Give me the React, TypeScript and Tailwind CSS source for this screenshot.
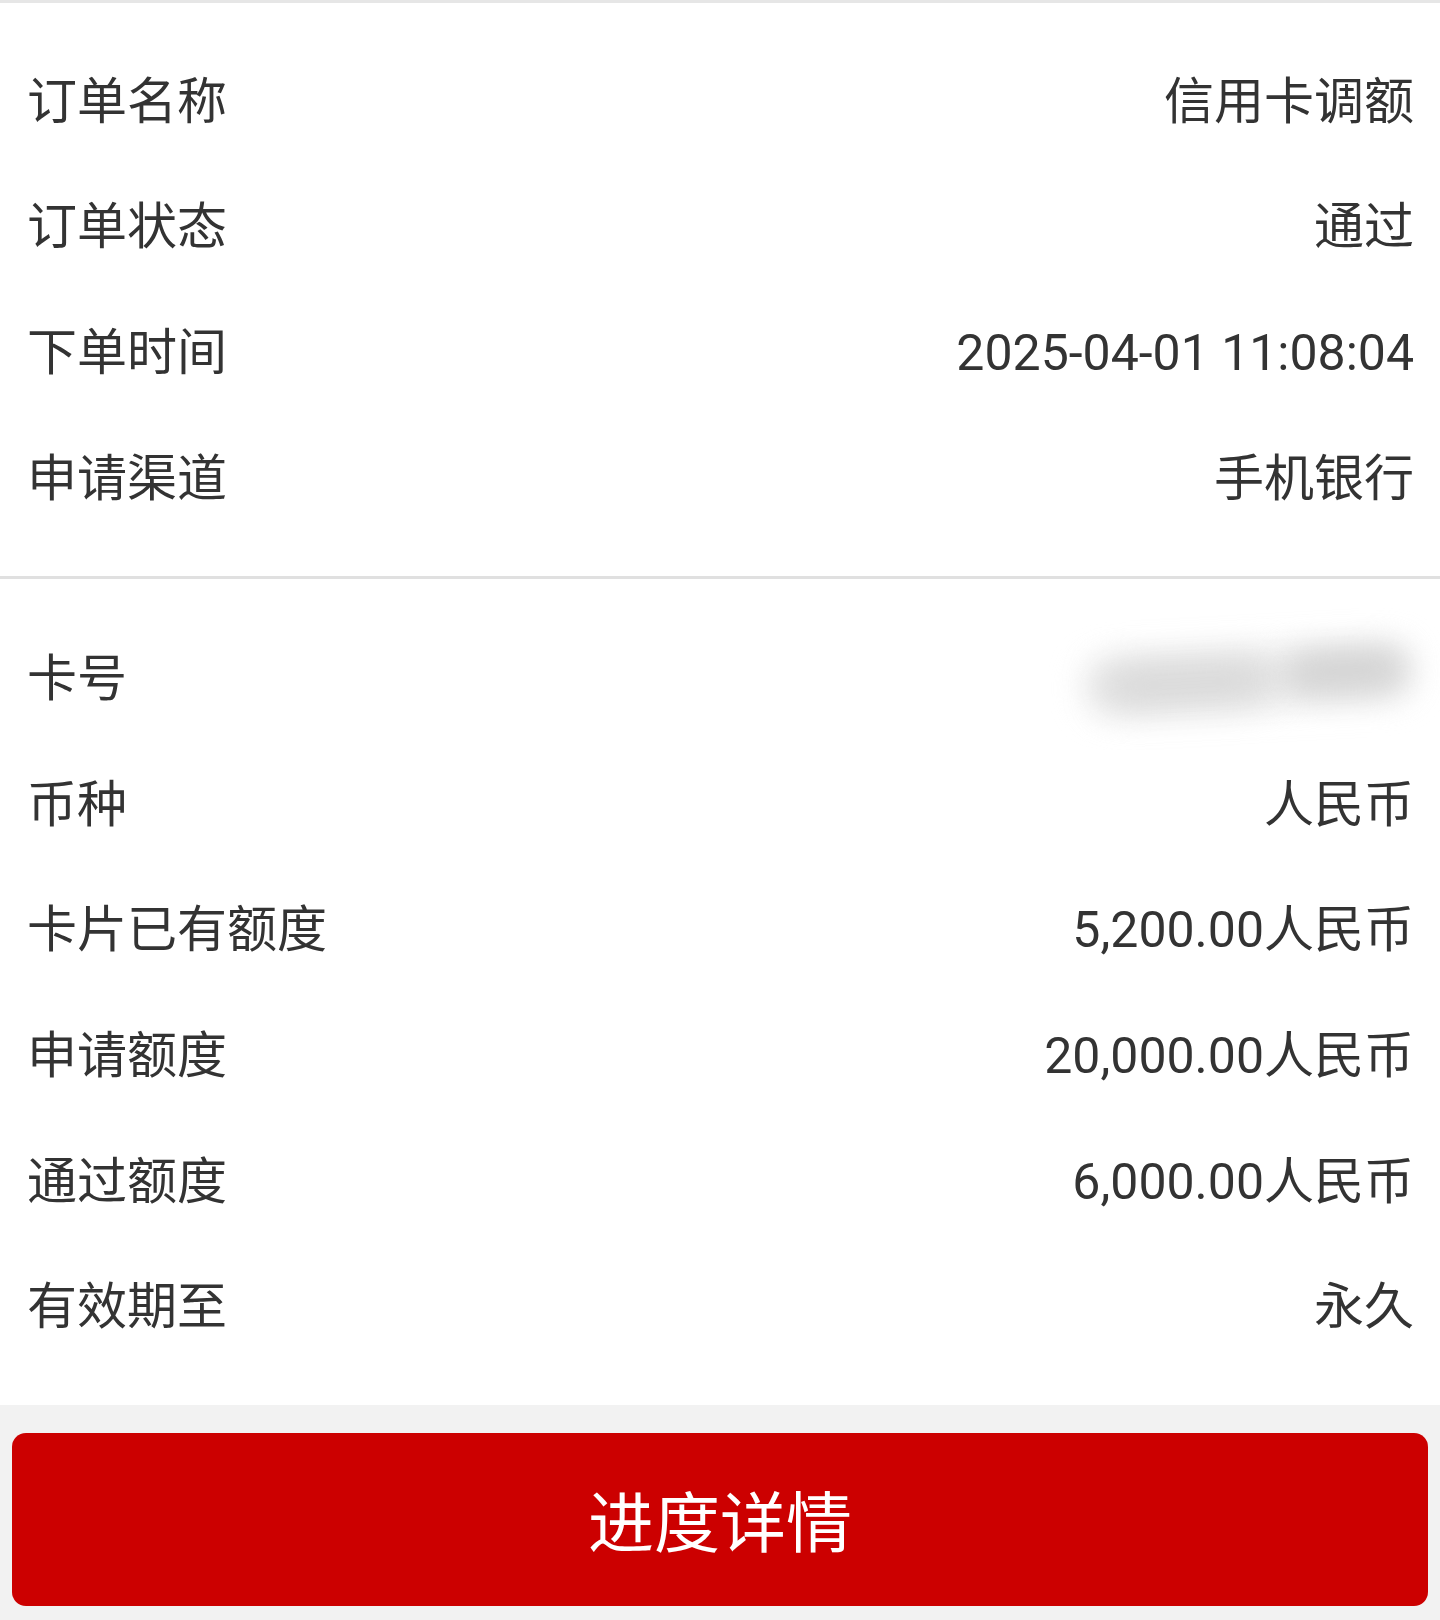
import React from "react";

const font = { fontFamily: "Roboto, 'Noto Sans CJK SC', sans-serif" };

function Row({ label, value }: { label: string; value: React.ReactNode }) {
  return (
    <div className="flex h-[125.6px] items-center justify-between pl-[27px] pr-[26px] text-[50px] leading-none text-[#333333]">
      <span>{label}</span>
      <span>{value}</span>
    </div>
  );
}

function Blurred() {
  return (
    <div className="relative mr-[-14px] h-[80px] w-[360px] -rotate-[3deg]">
      <div className="absolute inset-x-[16px] top-[14px] h-[52px] rounded-full bg-[#e9e9e9] blur-[16px]" />
      <div className="absolute left-[34px] top-[20px] h-[42px] w-[170px] rounded-full bg-[#d8d8d8] blur-[18px]" />
      <div className="absolute right-[22px] top-[16px] h-[42px] w-[120px] rounded-full bg-[#d3d3d3] blur-[16px]" />
    </div>
  );
}

export default function App() {
  return (
    <div className="flex h-[1620px] w-[1440px] flex-col bg-white" style={font}>
      <div className="border-t-[3px] border-[#e6e6e6] pb-[35px] pt-[36px]">
        <Row label="订单名称" value="信用卡调额" />
        <Row label="订单状态" value="通过" />
        <Row label="下单时间" value="2025-04-01 11:08:04" />
        <Row label="申请渠道" value="手机银行" />
      </div>
      <div className="border-t-[3px] border-[#e0e0e0] pb-[35px] pt-[37px]">
        <Row label="卡号" value={<Blurred />} />
        <Row label="币种" value="人民币" />
        <Row label="卡片已有额度" value="5,200.00人民币" />
        <Row label="申请额度" value="20,000.00人民币" />
        <Row label="通过额度" value="6,000.00人民币" />
        <Row label="有效期至" value="永久" />
      </div>
      <div className="flex-1 bg-[#f2f2f2] px-[12px] pt-[28px]">
        <button className="flex h-[173px] w-full items-center justify-center rounded-[14px] bg-[#cc0000] pt-[12px] text-[66px] leading-none text-white">
          进度详情
        </button>
      </div>
    </div>
  );
}
